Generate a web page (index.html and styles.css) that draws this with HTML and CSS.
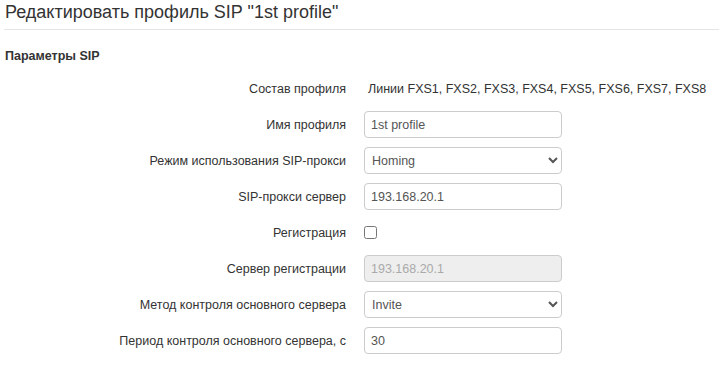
FILE: index.html
```html
<!DOCTYPE html>
<html lang="ru">
<head>
    <meta charset="UTF-8">
    <title>Редактировать профиль SIP</title>
    <link rel="stylesheet" href="styles.css">
</head>
<body>

<div class="page">
    <h1 class="page-title">Редактировать профиль SIP "1st profile"</h1>

    <h2 class="section-title">Параметры SIP</h2>

    <div class="form">
        <div class="form-row">
            <label>Состав профиля</label>
            <div class="static-value">Линии FXS1, FXS2, FXS3, FXS4, FXS5, FXS6, FXS7, FXS8</div>
        </div>
        <div class="form-row">
            <label for="name">Имя профиля</label>
            <input type="text" id="name" class="form-control" value="1st profile">
        </div>
        <div class="form-row">
            <label for="mode">Режим использования SIP-прокси</label>
            <select id="mode" class="form-control">
                <option>Homing</option>
                <option>Parking</option>
            </select>
        </div>
        <div class="form-row">
            <label for="proxy">SIP-прокси сервер</label>
            <input type="text" id="proxy" class="form-control" value="193.168.20.1">
        </div>
        <div class="form-row">
            <label for="reg">Регистрация</label>
            <div><input type="checkbox" id="reg" class="check"></div>
        </div>
        <div class="form-row">
            <label for="regsrv">Сервер регистрации</label>
            <input type="text" id="regsrv" class="form-control" value="193.168.20.1" disabled>
        </div>
        <div class="form-row">
            <label for="method">Метод контроля основного сервера</label>
            <select id="method" class="form-control">
                <option>Invite</option>
                <option>Options</option>
            </select>
        </div>
        <div class="form-row">
            <label for="period">Период контроля основного сервера, с</label>
            <input type="text" id="period" class="form-control" value="30">
        </div>
    </div>
</div>

</body>
</html>
```

FILE: styles.css
```css
body {
    font-family: "Liberation Sans", Arial, sans-serif;
    font-size: 12.5px;
    color: #333;
    background-color: #fff;
    margin: 0;
}
.page {
    padding: 0 0 0 5px;
}
.page-title {
    font-size: 18px;
    font-weight: normal;
    line-height: 21px;
    margin: 2px 0 0 -1px;
    padding: 0 0 6px 1px;
    border-bottom: 1px solid #e5e5e5;
}
.section-title {
    font-size: 12.5px;
    font-weight: bold;
    line-height: 17px;
    margin: 18px 0 10px;
}
.form-row {
    display: grid;
    grid-template-columns: 341px 198px;
    column-gap: 18px;
    align-items: center;
    height: 27px;
    margin-bottom: 9px;
}
.form-row label {
    text-align: right;
}
.static-value {
    padding-left: 4px;
    white-space: nowrap;
}
.form-control {
    box-sizing: border-box;
    width: 198px;
    height: 27px;
    padding: 0 6px;
    font-family: inherit;
    font-size: 12.5px;
    color: #555;
    background-color: #fff;
    border: 1px solid #ccc;
    border-radius: 4px;
    margin: 0;
}
select.form-control {
    padding-left: 3px;
}
.form-control:disabled {
    background-color: #eee;
    color: #aaa;
}
.check {
    display: block;
    width: 13px;
    height: 13px;
    margin: 0;
}
```
